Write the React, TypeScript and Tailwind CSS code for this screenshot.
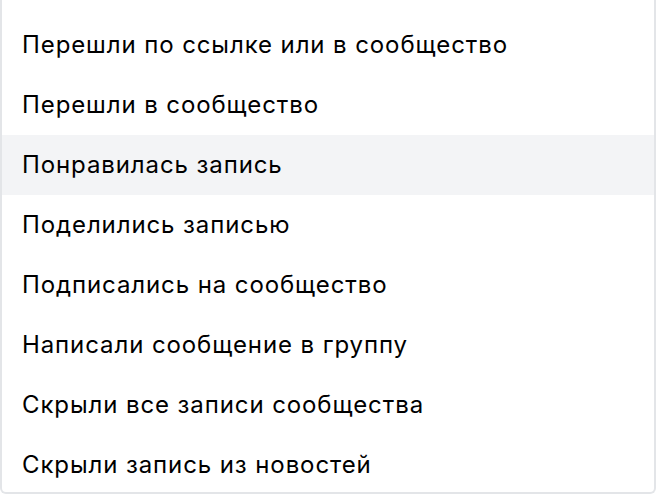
import React from 'react'

const items = [
  'Перешли по ссылке или в сообщество',
  'Перешли в сообщество',
  'Понравилась запись',
  'Поделились записью',
  'Подписались на сообщество',
  'Написали сообщение в группу',
  'Скрыли все записи сообщества',
  'Скрыли запись из новостей',
]

export default function App() {
  return (
    <div className="w-[656px] h-[496px] bg-white overflow-hidden">
      <div className="h-[494px] border-x-2 border-b-2 border-[#e3e5e8] rounded-b-md overflow-hidden pt-[15px] font-['Inter',sans-serif]">
        <ul>
          {items.map((item, i) => (
            <li
              key={item}
              className={`h-[60px] flex items-center pl-[20px] text-[24px] tracking-[0.9px] text-black ${
                i === 2 ? 'bg-[#f3f4f6]' : ''
              }`}
            >
              {item}
            </li>
          ))}
        </ul>
      </div>
    </div>
  )
}
